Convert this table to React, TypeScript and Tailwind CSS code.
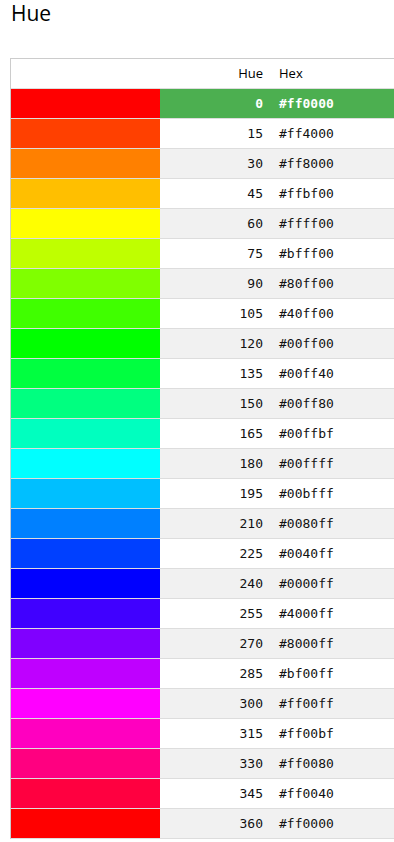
import React from "react";

function hex2(n: number) {
  return n.toString(16).padStart(2, "0");
}

function hueToHex(h: number) {
  const hh = (h % 360) / 60;
  const x = 1 - Math.abs((hh % 2) - 1);
  let r = 0, g = 0, b = 0;
  if (hh < 1) { r = 1; g = x; }
  else if (hh < 2) { r = x; g = 1; }
  else if (hh < 3) { g = 1; b = x; }
  else if (hh < 4) { g = x; b = 1; }
  else if (hh < 5) { r = x; b = 1; }
  else { r = 1; b = x; }
  return "#" + hex2(Math.round(r * 255)) + hex2(Math.round(g * 255)) + hex2(Math.round(b * 255));
}

const hexes: Record<number, string> = {
  0: "#ff0000", 15: "#ff4000", 30: "#ff8000", 45: "#ffbf00", 60: "#ffff00",
  75: "#bfff00", 90: "#80ff00", 105: "#40ff00", 120: "#00ff00", 135: "#00ff40",
  150: "#00ff80", 165: "#00ffbf", 180: "#00ffff", 195: "#00bfff", 210: "#0080ff",
  225: "#0040ff", 240: "#0000ff", 255: "#4000ff", 270: "#8000ff", 285: "#bf00ff",
  300: "#ff00ff", 315: "#ff00bf", 330: "#ff0080", 345: "#ff0040", 360: "#ff0000",
};

const hues = Array.from({ length: 25 }, (_, i) => i * 15);

export default function App() {
  return (
    <div className="w-[394px] h-[842px] overflow-hidden bg-white" style={{ fontFamily: "'Open Sans', 'DejaVu Sans', sans-serif" }}>
      <div className="pl-[11px] pt-0 text-[21px] leading-[26px] text-black">Hue</div>
      <div className="ml-[10px] mt-[32px] w-[520px] border-l border-t border-[#cccccc]">
        <div className="flex h-[30px] border-b border-[#dddddd] text-[13px] text-black">
          <div className="w-[149px]" />
          <div className="w-[111px] flex items-center justify-end pr-2">Hue</div>
          <div className="flex-1 flex items-center pl-2">Hex</div>
        </div>
        {hues.map((h, i) => {
          const selected = i === 0;
          const rowBg = selected ? "bg-[#4caf50] text-white font-bold" : i % 2 === 0 ? "bg-[#f1f1f1] text-[#111111]" : "bg-white text-[#111111]";
          const hex = hexes[h] ?? hueToHex(h);
          return (
            <div key={h} className={`flex h-[30px] border-b border-[#dddddd] ${rowBg}`} style={{ fontFamily: "'DejaVu Sans Mono', 'Liberation Mono', monospace" }}>
              <div className="w-[149px] h-full" style={{ backgroundColor: hex }} />
              <div className="w-[111px] flex items-center justify-end pr-2 text-[13px]">{h}</div>
              <div className="flex-1 flex items-center pl-2 text-[13px]">{hex}</div>
            </div>
          );
        })}
      </div>
    </div>
  );
}
